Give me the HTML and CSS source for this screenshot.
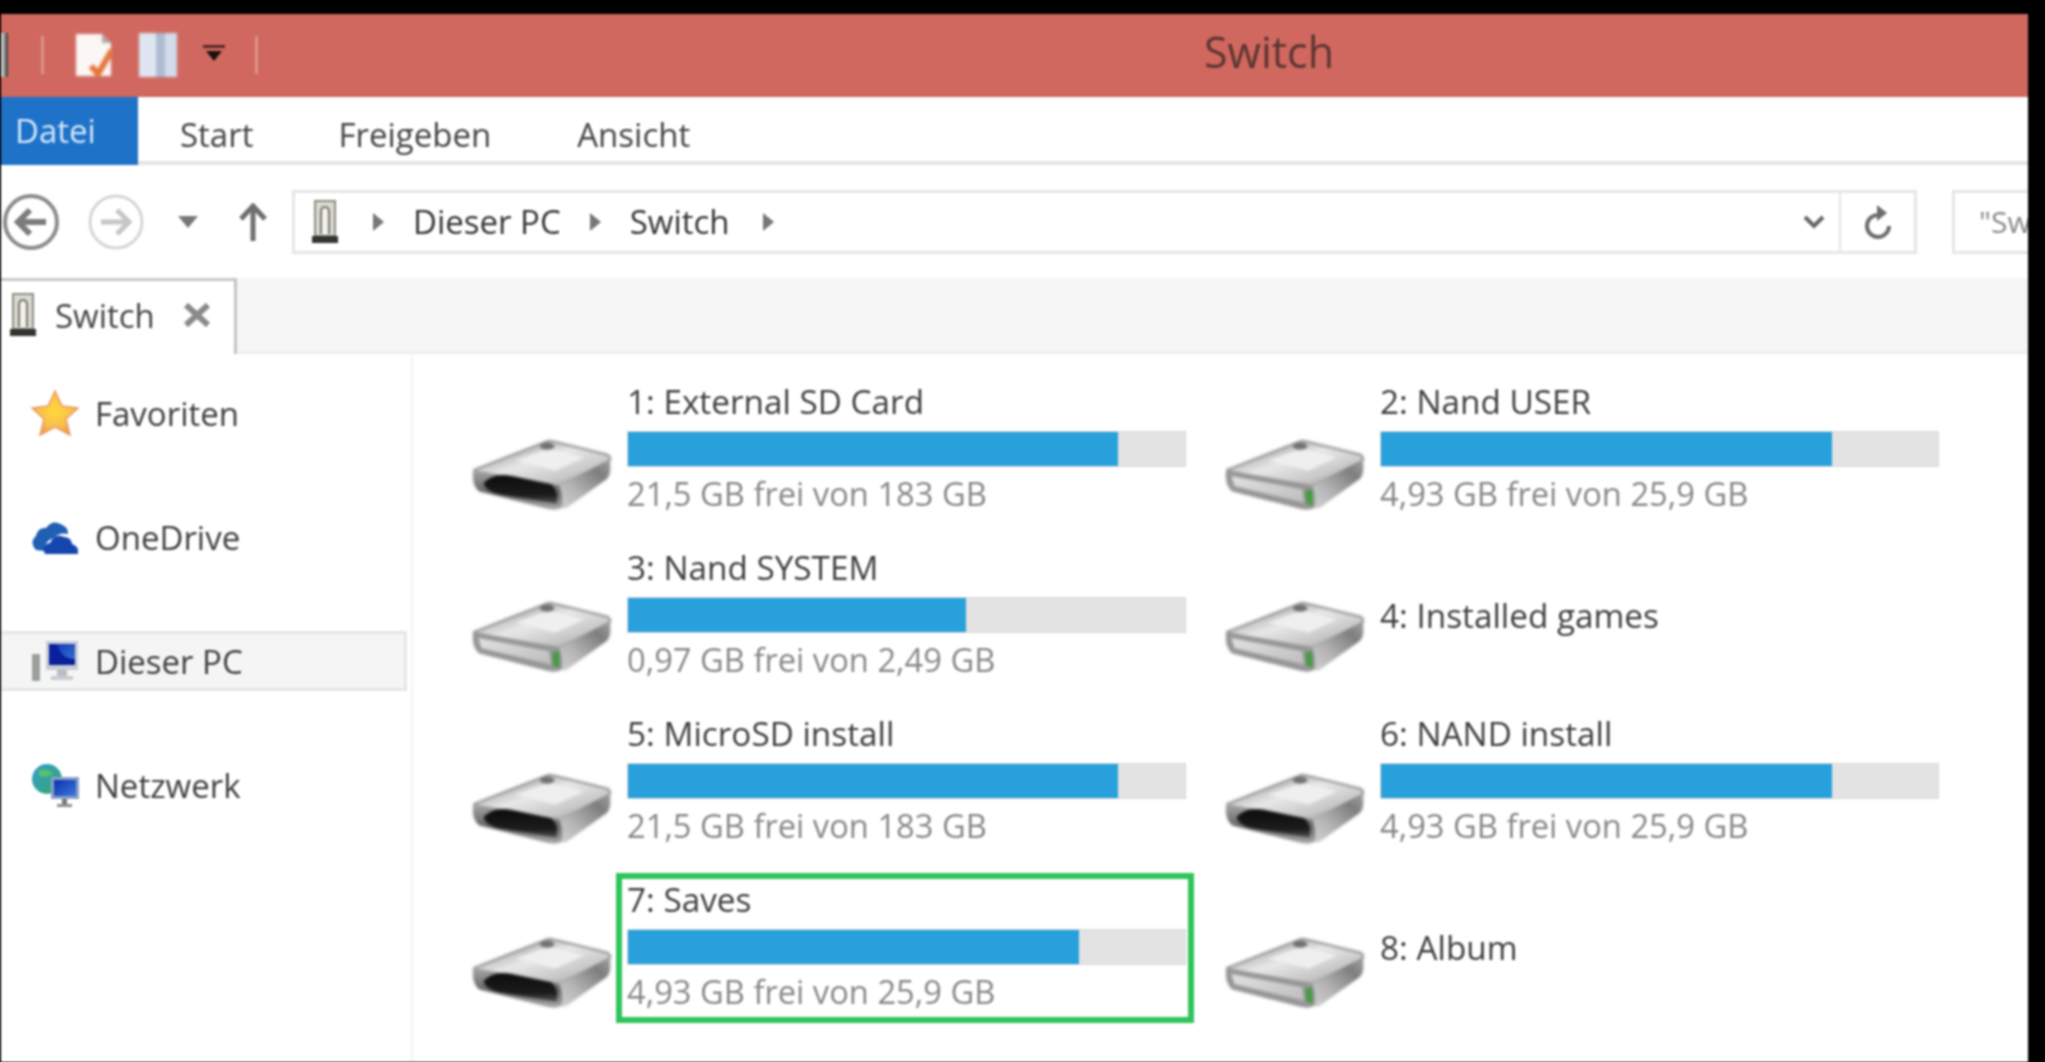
FILE: index.html
```html
<!DOCTYPE html>
<html lang="de">
<head>
<meta charset="utf-8">
<title>Switch</title>
<link rel="stylesheet" href="styles.css">
</head>
<body>
<svg class="defs" width="0" height="0" aria-hidden="true">
  <defs>
    <linearGradient id="topFace" x1="0" y1="0" x2="1" y2="1">
      <stop offset="0" stop-color="#7c7c7c"/><stop offset=".45" stop-color="#e8e8e8"/><stop offset=".72" stop-color="#c8c8c8"/><stop offset="1" stop-color="#8e8e8e"/>
    </linearGradient>
    <linearGradient id="sideFace" x1="0" y1="1" x2="1" y2="0">
      <stop offset="0" stop-color="#d2d2d2"/><stop offset=".35" stop-color="#b4b4b4"/><stop offset=".75" stop-color="#7e7e7e"/><stop offset="1" stop-color="#a0a0a0"/>
    </linearGradient>
    <linearGradient id="frontDark" x1="0" y1="0" x2="0" y2="1">
      <stop offset="0" stop-color="#a8a8a8"/><stop offset=".55" stop-color="#666"/><stop offset="1" stop-color="#aaa"/>
    </linearGradient>
    <linearGradient id="frontLight" x1="0" y1="0" x2="1" y2="1">
      <stop offset="0" stop-color="#e2e2e2"/><stop offset="1" stop-color="#bcbcbc"/>
    </linearGradient>
    <linearGradient id="slot" x1="0" y1="0" x2="0" y2="1">
      <stop offset="0" stop-color="#0c0c0c"/><stop offset=".7" stop-color="#1c1c1c"/><stop offset="1" stop-color="#555"/>
    </linearGradient>
    <radialGradient id="starFill" cx=".5" cy=".45" r=".6">
      <stop offset="0" stop-color="#ffd93a"/><stop offset=".6" stop-color="#f9bf4e"/><stop offset="1" stop-color="#ee8f4a"/>
    </radialGradient>
    <linearGradient id="screen" x1="0" y1="0" x2="1" y2="1">
      <stop offset="0" stop-color="#0b2fb0"/><stop offset="1" stop-color="#3f78d8"/>
    </linearGradient>
    <linearGradient id="globe" x1="0" y1="0" x2="1" y2="1">
      <stop offset="0" stop-color="#2f9fd0"/><stop offset="1" stop-color="#3aa66a"/>
    </linearGradient>
    <symbol id="driveBody" viewBox="0 0 140 74">
      <path d="M5 31 L74 4 Q78 2 84 4 L134 16 Q138 18 137 22 L88 47 L8 33 Z" fill="url(#topFace)" stroke="#8e8e8e" stroke-width="2" stroke-linejoin="round"/>
      <path d="M45 22 L78 10 L112 19 L84 32 Z" fill="#efefef"/>
      <ellipse cx="76" cy="8" rx="7" ry="3.4" fill="#707070"/>
      <path d="M87 47 L137 21 Q139 36 134 40 L95 68 Q90 70 89 66 Z" fill="url(#sideFace)"/>
    </symbol>
    <symbol id="driveDark" viewBox="0 0 140 74">
      <use href="#driveBody"/>
      <path d="M4 31 L88 47 Q92 60 90 68 Q84 71 76 69 L10 52 Q2 46 4 31 Z" fill="url(#frontDark)"/>
      <path d="M14 44 Q24 33 42 37 L80 45 Q88 52 85 64 L30 55 Q16 52 14 44 Z" fill="url(#slot)"/>
    </symbol>
    <symbol id="driveLight" viewBox="0 0 140 74">
      <use href="#driveBody"/>
      <path d="M4 31 L88 47 Q92 60 90 68 Q84 71 76 69 L10 52 Q2 46 4 31 Z" fill="#969696"/>
      <path d="M9 37 L78 50 L80 63 L12 47 Z" fill="url(#frontLight)"/>
      <path d="M81 51 L88 50 L88 66 L82 64 Z" fill="#469a44"/>
    </symbol>
    <symbol id="portable" viewBox="0 0 28 44">
      <rect x="4" y="1" width="20" height="35" fill="#d9d9d0" stroke="#8e8e86" stroke-width="2"/>
      <path d="M10 34 V12 Q10 7 14 7 Q18 7 18 12 V34" fill="#f2f2ea" stroke="#77776f" stroke-width="2"/>
      <rect x="1" y="36" width="26" height="7" fill="#33332f"/>
    </symbol>
  </defs>
</svg>

<div class="window">
  <header class="titlebar">
    <div class="qat">
      <span class="qat-edge"></span>
      <span class="qat-sep"></span>
      <svg class="qat-doc" viewBox="0 0 38 44"><path d="M1 1 H27 L36 10 V43 H1 Z" fill="#fbf7f5"/><path d="M27 1 L36 10 H27 Z" fill="#aaa"/><path d="M16 33 L23 41 L37 17" fill="none" stroke="#e6763a" stroke-width="6"/></svg>
      <svg class="qat-book" viewBox="0 0 38 44"><rect width="38" height="44" fill="#dfe6f2"/><rect x="17" y="0" width="9" height="44" fill="#aebbd2"/><rect x="26" width="12" height="44" fill="#d2dcec"/></svg>
      <svg class="qat-more" viewBox="0 0 24 16"><rect x="1" y="0" width="22" height="3" fill="#5a2723"/><path d="M4 6 H20 L12 16 Z" fill="#1d1010"/></svg>
      <span class="qat-sep"></span>
    </div>
    <h1 class="title">Switch</h1>
  </header>

  <nav class="ribbon">
    <span class="rtab rtab-file">Datei</span>
    <span class="rtab rtab-start">Start</span>
    <span class="rtab rtab-share">Freigeben</span>
    <span class="rtab rtab-view">Ansicht</span>
  </nav>

  <div class="navbar">
    <svg class="nav-back" viewBox="0 0 58 58"><circle cx="29" cy="29" r="26" fill="none" stroke="#8c8c8c" stroke-width="4"/><path d="M44 29 H17 M28 17 L16 29 L28 41" fill="none" stroke="#7c7c7c" stroke-width="6"/></svg>
    <svg class="nav-fwd" viewBox="0 0 58 58"><circle cx="29" cy="29" r="26" fill="none" stroke="#d6d6d6" stroke-width="3"/><path d="M14 29 H41 M30 17 L42 29 L30 41" fill="none" stroke="#c6c6c6" stroke-width="5"/></svg>
    <svg class="nav-drop" viewBox="0 0 20 12"><path d="M0 0 H20 L10 12 Z" fill="#777"/></svg>
    <svg class="nav-up" viewBox="0 0 28 38"><path d="M14 38 V4 M2 16 L14 3 L26 16" fill="none" stroke="#6f6f6f" stroke-width="5"/></svg>
    <div class="address">
      <div class="crumbs">
        <svg class="crumb-icon"><use href="#portable"/></svg>
        <span class="chev chev-first"></span>
        <span class="crumb">Dieser PC</span>
        <span class="chev"></span>
        <span class="crumb">Switch</span>
        <span class="chev chev-last"></span>
      </div>
      <svg class="addr-down" viewBox="0 0 22 14"><path d="M2 2 L11 11 L20 2" fill="none" stroke="#666" stroke-width="4"/></svg>
      <div class="refresh">
        <svg viewBox="0 0 30 36"><path d="M16 11 A11 11 0 1 0 26 22" fill="none" stroke="#6c6c6c" stroke-width="4"/><path d="M14 1 L24 9 L14 17 Z" fill="#6c6c6c"/></svg>
      </div>
    </div>
    <div class="search">"Sw</div>
  </div>

  <div class="tabstrip">
    <div class="tab">
      <svg class="tab-icon"><use href="#portable"/></svg>
      <span class="tab-label">Switch</span>
      <svg class="tab-close" viewBox="0 0 28 24"><path d="M3 2 L25 22 M25 2 L3 22" stroke="#8a8a8a" stroke-width="6"/></svg>
    </div>
  </div>

  <div class="content">
    <aside class="sidebar">
      <div class="side-item side-fav">
        <svg class="side-icon" viewBox="0 0 48 46"><path d="M24 1 L31 16 L47 18 L35 29 L39 45 L24 37 L9 45 L13 29 L1 18 L17 16 Z" fill="url(#starFill)" stroke="#ec9a62" stroke-width="1.5"/></svg>
        <span>Favoriten</span>
      </div>
      <div class="side-item side-cloud">
        <svg class="side-icon" viewBox="0 0 48 38"><path d="M5 32 Q-2 24 5 18 Q7 9 15 10 Q22 0 33 8 Q37 10 37 16 Q28 14 23 20 Q14 22 13 33 Z" fill="#1f5fb4"/><path d="M14 36 Q10 27 19 25 Q24 15 33 19 Q40 19 41 26 Q48 28 47 36 Z" fill="#1546ae"/></svg>
        <span>OneDrive</span>
      </div>
      <div class="side-item side-pc">
        <svg class="side-icon" viewBox="0 0 48 42"><rect x="15" y="1" width="32" height="29" fill="#c8ccd4"/><rect x="18" y="4" width="26" height="21" fill="url(#screen)"/><path d="M26 4 H18 V25 H44 V19 Q30 19 26 4 Z" fill="#0a1f9c"/><rect x="26" y="30" width="10" height="6" fill="#b8bcc4"/><rect x="20" y="36" width="22" height="4" fill="#c9ccd2"/><rect x="1" y="14" width="8" height="27" rx="1" fill="#9aa09c"/></svg>
        <span>Dieser PC</span>
      </div>
      <div class="side-item side-net">
        <svg class="side-icon" viewBox="0 0 48 46"><circle cx="16" cy="17" r="15" fill="url(#globe)"/><path d="M8 8 Q18 6 22 12 Q14 16 8 14 Z" fill="#59c06e"/><rect x="20" y="15" width="28" height="22" fill="#8aa0c8"/><rect x="23" y="18" width="22" height="16" fill="url(#screen)"/><rect x="31" y="37" width="5" height="5" fill="#73787f"/><rect x="26" y="42" width="15" height="3" fill="#8b9098"/></svg>
        <span>Netzwerk</span>
      </div>
    </aside>

    <main class="drives">
      <div class="drive">
        <svg class="drive-icon"><use href="#driveDark"/></svg>
        <div class="info">
          <div class="name">1: External SD Card</div>
          <div class="bar"><div class="fill" style="width:88%"></div></div>
          <div class="free">21,5 GB frei von 183 GB</div>
        </div>
      </div>
      <div class="drive">
        <svg class="drive-icon"><use href="#driveLight"/></svg>
        <div class="info">
          <div class="name">2: Nand USER</div>
          <div class="bar"><div class="fill" style="width:81%"></div></div>
          <div class="free">4,93 GB frei von 25,9 GB</div>
        </div>
      </div>
      <div class="drive">
        <svg class="drive-icon"><use href="#driveLight"/></svg>
        <div class="info">
          <div class="name">3: Nand SYSTEM</div>
          <div class="bar"><div class="fill" style="width:60.6%"></div></div>
          <div class="free">0,97 GB frei von 2,49 GB</div>
        </div>
      </div>
      <div class="drive">
        <svg class="drive-icon"><use href="#driveLight"/></svg>
        <div class="info info-plain">
          <div class="name">4: Installed games</div>
        </div>
      </div>
      <div class="drive">
        <svg class="drive-icon"><use href="#driveDark"/></svg>
        <div class="info">
          <div class="name">5: MicroSD install</div>
          <div class="bar"><div class="fill" style="width:88%"></div></div>
          <div class="free">21,5 GB frei von 183 GB</div>
        </div>
      </div>
      <div class="drive">
        <svg class="drive-icon"><use href="#driveDark"/></svg>
        <div class="info">
          <div class="name">6: NAND install</div>
          <div class="bar"><div class="fill" style="width:81%"></div></div>
          <div class="free">4,93 GB frei von 25,9 GB</div>
        </div>
      </div>
      <div class="drive">
        <svg class="drive-icon"><use href="#driveDark"/></svg>
        <div class="info info-marked">
          <div class="name">7: Saves</div>
          <div class="bar"><div class="fill" style="width:81%"></div></div>
          <div class="free">4,93 GB frei von 25,9 GB</div>
        </div>
      </div>
      <div class="drive">
        <svg class="drive-icon"><use href="#driveLight"/></svg>
        <div class="info info-plain">
          <div class="name">8: Album</div>
        </div>
      </div>
    </main>
  </div>
</div>
</body>
</html>
```
FILE: styles.css
```css
* { box-sizing: border-box; }
html, body { margin: 0; height: 100%; }
body {
  background: #000;
  overflow: hidden;
  font-family: "Open Sans", "Liberation Sans", sans-serif;
  color: #333;
}
.defs { position: absolute; }
.window {
  height: 1048px;
  margin: 14px 17px 0 1px;
  background: #fff;
  display: flex;
  flex-direction: column;
  overflow: hidden;
  filter: blur(0.9px);
}

/* title bar */
.titlebar {
  height: 83px;
  flex: none;
  background: #d0685f;
  display: flex;
  align-items: center;
  border-bottom: 2px solid #c9675f;
}
.qat { width: 270px; display: flex; align-items: center; flex: none; height: 100%; }
.qat-edge { width: 7px; height: 44px; background: linear-gradient(90deg, #f0eeee, #333); }
.qat-sep { width: 3px; height: 38px; background: #dc938a; }
.qat .qat-sep:nth-of-type(2) { margin-left: 33px; }
.qat-doc { width: 38px; height: 44px; margin-left: 31px; filter: blur(1px); }
.qat-book { width: 38px; height: 44px; margin-left: 26px; filter: blur(1px); }
.qat-more { width: 24px; height: 16px; margin: -3px 0 0 25px; }
.qat-more + .qat-sep { margin-left: 29px; }
.title {
  margin: -6px 0 0;
  padding-left: 933px;
  font-size: 43px;
  font-weight: 400;
  color: #5b3532;
  line-height: 1;
}

/* ribbon tabs */
.ribbon {
  height: 68px;
  flex: none;
  display: flex;
  align-items: center;
  border-bottom: 4px solid #e4e4e4;
  font-size: 33px;
  color: #444;
}
.rtab { display: flex; align-items: center; height: 100%; padding-top: 11px; }
.rtab-file { width: 137px; padding: 0 0 2px 14px; background: #1e73c9; color: #d3e6f8; height: 68px; margin-bottom: -4px; align-self: flex-start; }
.rtab-start { margin-left: 42px; }
.rtab-share { margin-left: 85px; }
.rtab-view { margin-left: 86px; }

/* navigation row */
.navbar {
  height: 113px;
  flex: none;
  display: flex;
  align-items: center;
}
.nav-back { width: 58px; height: 58px; margin-left: 1px; flex: none; }
.nav-fwd { width: 58px; height: 58px; margin-left: 27px; flex: none; }
.nav-drop { width: 20px; height: 12px; margin: 0 0 0 33px; flex: none; }
.nav-up { width: 28px; height: 38px; margin-left: 41px; flex: none; }
.address {
  width: 1625px;
  height: 64px;
  margin-left: 25px;
  flex: none;
  border: 3px solid #e6e6e6;
  display: flex;
  align-items: center;
}
.crumbs { flex: 1; display: flex; align-items: center; font-size: 33px; color: #333; }
.crumb-icon { width: 28px; height: 44px; margin-left: 16px; }
.crumb { line-height: 1; }
.chev { width: 0; height: 0; border-left: 11px solid #777; border-top: 9px solid transparent; border-bottom: 9px solid transparent; margin: 0 29px; }
.chev-first { margin-left: 34px; }
.chev-last { margin-left: 33px; }
.addr-down { width: 22px; height: 14px; margin-right: 14px; }
.refresh { width: 75px; height: 100%; border-left: 2px solid #e4e4e4; display: flex; align-items: center; justify-content: center; }
.refresh svg { width: 30px; height: 36px; }
.search {
  margin-left: 35px;
  flex: 1;
  height: 64px;
  border: 3px solid #e6e6e6;
  border-right: 0;
  padding-left: 24px;
  font-size: 30px;
  color: #8a8a8a;
  display: flex;
  align-items: center;
  overflow: hidden;
}

/* tab strip */
.tabstrip {
  height: 76px;
  flex: none;
  background: #f6f6f6;
  border-bottom: 3px solid #efefef;
  display: flex;
}
.tab {
  width: 236px;
  background: #fff;
  border-top: 3px solid #c8c8c8;
  border-right: 3px solid #c4c4c4;
  display: flex;
  align-items: center;
  padding-bottom: 5px;
  margin-bottom: -3px;
}
.tab-icon { width: 28px; height: 44px; margin-left: 8px; flex: none; }
.tab-label { margin-left: 18px; font-size: 33px; color: #444; }
.tab-close { width: 28px; height: 24px; margin-left: 28px; flex: none; }

/* content */
.content { flex: 1; display: flex; min-height: 0; }
.sidebar {
  width: 412px;
  flex: none;
  border-right: 2px solid #f4f4f4;
  padding: 29px 4px 0 0;
  display: flex;
  flex-direction: column;
  gap: 64px;
}
.side-item {
  height: 60px;
  display: flex;
  align-items: center;
  font-size: 33px;
  color: #3e3e3e;
  padding-left: 30px;
}
.side-item span { margin-left: 16px; }
.side-icon { width: 48px; height: 46px; flex: none; overflow: visible; filter: blur(0.5px); }
.side-cloud .side-icon { height: 38px; }
.side-pc { background: #f5f5f5; border: solid #e6e6e6; border-width: 3px 3px 3px 0; }

.drives {
  flex: 1;
  padding: 24px 0 0 57px;
  display: grid;
  grid-template-columns: 753px 700px;
  grid-auto-rows: 166px;
  align-content: start;
}
.drive { display: flex; align-items: flex-start; }
.drive-icon { width: 146px; height: 76px; margin: 60px -1px 0 -2px; flex: none; filter: blur(1.2px); }
.drive:nth-child(3) .drive-icon, .drive:nth-child(4) .drive-icon { margin-top: 56px; }
.drive:nth-child(5) .drive-icon, .drive:nth-child(6) .drive-icon { margin-top: 62px; }
.info { width: 559px; margin-left: 14px; position: relative; flex: none; }
.info-plain { align-self: center; margin-bottom: 24px; }
.name { height: 47px; line-height: 46px; font-size: 33.3px; color: #3e3e3e; white-space: nowrap; }
.bar { height: 36px; margin-top: 6px; background: #e3e3e3; border: 1px solid #d8d8d8; }
.fill { height: 100%; background: #27a0dc; }
.free { height: 48px; line-height: 48px; margin-top: 3px; font-size: 32.7px; color: #888; white-space: nowrap; }
.info-marked::after {
  content: "";
  position: absolute;
  inset: -3px -8px -7px -11px;
  border: 6px solid #2ec45a;
  pointer-events: none;
}
```
